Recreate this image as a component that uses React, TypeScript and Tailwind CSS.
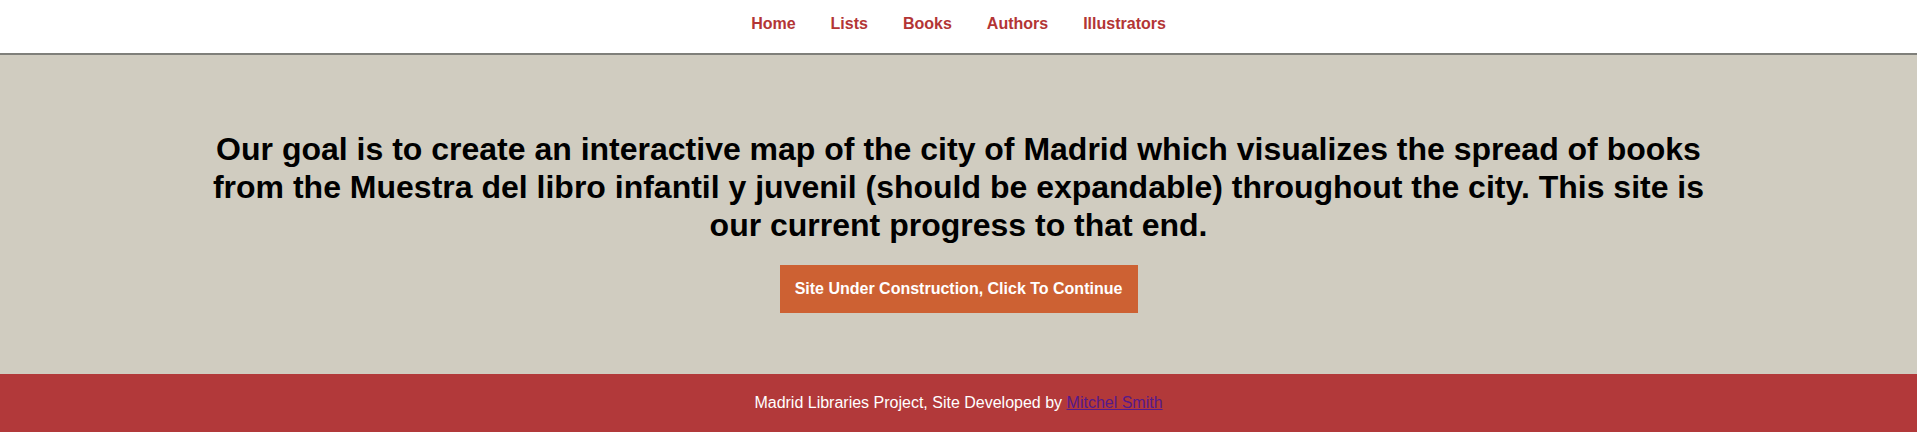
import React from 'react';

const links = ['Home', 'Lists', 'Books', 'Authors', 'Illustrators'];

const App = () => {
  return (
    <div className="min-h-screen bg-white font-['Liberation_Sans',Arial,sans-serif]">
      {/* Nav */}
      <nav className="h-[55px] border-b-2 border-[#7f7f7a] bg-white flex items-center justify-center pb-[6px]">
        <ul className="flex items-center gap-[35px]">
          {links.map((l) => (
            <li key={l}>
              <a href="#" className="text-[16px] font-bold text-[#b33535]">
                {l}
              </a>
            </li>
          ))}
        </ul>
      </nav>

      {/* Hero */}
      <main className="bg-[#d0ccc0] pt-[75px] pb-[61px]">
        <h1 className="w-4/5 mx-auto text-center text-[32px] leading-[38px] font-bold text-black">
          Our goal is to create an interactive map of the city of Madrid which visualizes the spread of books
          from the Muestra del libro infantil y juvenil (should be expandable) throughout the city. This site is
          our current progress to that end.
        </h1>
        <div className="flex justify-center mt-[21px]">
          <a
            href="#"
            className="h-[48px] w-[358px] flex items-center justify-center bg-[#cd6133] text-white text-[16px] font-bold"
          >
            Site Under Construction, Click To Continue
          </a>
        </div>
      </main>

      {/* Footer */}
      <footer className="h-[58px] bg-[#b2393a] flex items-center justify-center text-white text-[16px]">
        <p>
          Madrid Libraries Project, Site Developed by{' '}
          <a href="#" className="text-[#551a8b] underline">
            Mitchel Smith
          </a>
        </p>
      </footer>
    </div>
  );
};

export default App;
